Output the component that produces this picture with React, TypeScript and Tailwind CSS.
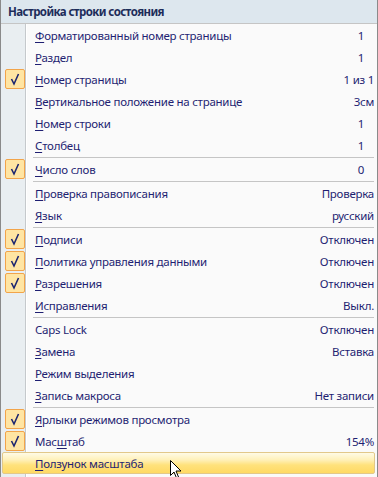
import React from "react";

type Item = {
  pre?: string;
  u: string;
  post: string;
  value?: string;
  checked?: boolean;
  num?: boolean;
  hot?: boolean;
};

type Entry = Item | "sep";

const entries: Entry[] = [
  { u: "Ф", post: "орматированный номер страницы", value: "1", num: true },
  { u: "Р", post: "аздел", value: "1", num: true },
  { u: "Н", post: "омер страницы", value: "1 из 1", checked: true },
  { u: "В", post: "ертикальное положение на странице", value: "3см" },
  { u: "Н", post: "омер строки", value: "1", num: true },
  { u: "С", post: "толбец", value: "1", num: true },
  "sep",
  { u: "Ч", post: "исло слов", value: "0", checked: true, num: true },
  "sep",
  { u: "П", post: "роверка правописания", value: "Проверка" },
  { u: "Я", post: "зык", value: "русский" },
  "sep",
  { u: "П", post: "одписи", value: "Отключен", checked: true },
  { u: "П", post: "олитика управления данными", value: "Отключен", checked: true },
  { u: "Р", post: "азрешения", value: "Отключен", checked: true },
  { u: "И", post: "справления", value: "Выкл." },
  "sep",
  { u: "", post: "Caps Lock", value: "Отключен" },
  { u: "З", post: "амена", value: "Вставка" },
  { u: "Р", post: "ежим выделения" },
  { u: "З", post: "апись макроса", value: "Нет записи" },
  "sep",
  { u: "Я", post: "рлыки режимов просмотра", checked: true },
  { pre: "Мас", u: "ш", post: "таб", value: "154%", checked: true },
  { u: "П", post: "олзунок масштаба", hot: true },
];

function Check() {
  return (
    <div className="w-[20px] h-[20px] rounded-[2px] border border-[#f2a44a] bg-[#ffe5a3] flex items-center justify-center">
      <svg width="18" height="18" viewBox="0 0 18 18">
        <path d="M5.5 9 L8 14 L12.5 4" fill="none" stroke="#1d2670" strokeWidth="1.6" />
      </svg>
    </div>
  );
}

function Row({ it }: { it: Item }) {
  const label = (
    <span>
      {it.pre}
      {it.u && <span className="underline underline-offset-[2px] decoration-1">{it.u}</span>}
      {it.post}
    </span>
  );
  if (it.hot) {
    return (
      <div className="h-[22px] flex items-center ml-[1px] mr-[2px] rounded-[2px] border border-[#e2c88a] bg-[linear-gradient(to_bottom,#fffbe6_0%,#fff0b8_35%,#ffe27c_60%,#ffd964_100%)]">
        <div className="w-[32px] shrink-0" />
        <div className="flex-1 text-[#1f1f72] pt-[1px]">{label}</div>
      </div>
    );
  }
  return (
    <div className="h-[22px] flex items-center">
      <div className="w-[34px] shrink-0 pl-[4px] flex items-center">{it.checked && <Check />}</div>
      <div className="flex-1 text-[#1f1f72] whitespace-nowrap pt-[1px]">{label}</div>
      {it.value && (
        <div className={`text-[#1f1f72] whitespace-nowrap pt-[1px] ${it.num ? "pr-[13px]" : "pr-[3px]"}`}>{it.value}</div>
      )}
    </div>
  );
}

export default function App() {
  return (
    <div
      className="relative w-[378px] h-[477px] overflow-hidden border-l border-r border-[#8a8a8a] bg-[#fafafa] text-[11.5px] tracking-[-0.25px] leading-none"
      style={{ fontFamily: '"Noto Sans", "Open Sans", sans-serif' }}
    >
      <div className="h-[24px] bg-[#dde7ee] border-b border-[#c5c5c5] flex items-center pl-[7px] font-bold tracking-[-0.6px] text-[#1e2d5a]">
        Настройка строки состояния
      </div>
      <div className="h-[453px] bg-[linear-gradient(to_right,#e9eef1_0px,#e9eef1_24px,#c5c9cc_24px,#c5c9cc_25px,#ffffff_25px,#ffffff_26px,#fafafa_26px)]">
        {entries.map((e, i) =>
          e === "sep" ? (
            <div key={i} className="h-[2px] flex items-end pl-[32px] pr-[3px]">
              <div className="h-[1px] w-full bg-[#c5c5c5]" />
            </div>
          ) : (
            <Row key={i} it={e} />
          )
        )}
      </div>
      <svg className="absolute left-[169px] top-[460px]" width="12" height="19" viewBox="0 0 12 19">
        <path d="M0.5 0.5 L0.5 15.5 L4 12 L6.5 18 L8.5 17 L6 11 L11 11 Z" fill="#fff" stroke="#000" strokeWidth="1" />
      </svg>
    </div>
  );
}
